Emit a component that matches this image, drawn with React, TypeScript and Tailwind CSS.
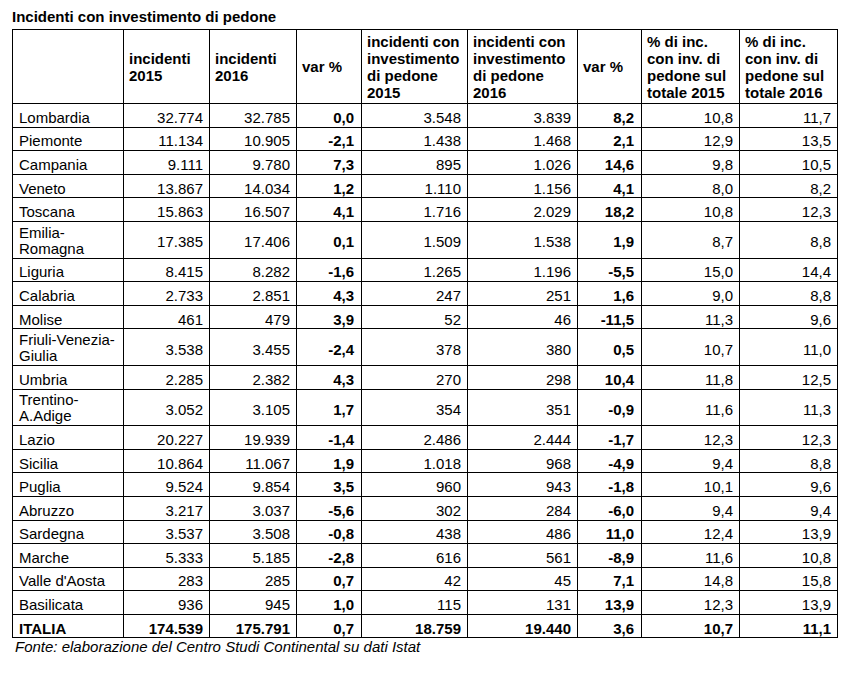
type Row = {
  region: string
  values: string[]
  tall?: boolean
  total?: boolean
}

const rows: Row[] = [
  { region: 'Lombardia', values: ['32.774', '32.785', '0,0', '3.548', '3.839', '8,2', '10,8', '11,7'] },
  { region: 'Piemonte', values: ['11.134', '10.905', '-2,1', '1.438', '1.468', '2,1', '12,9', '13,5'] },
  { region: 'Campania', values: ['9.111', '9.780', '7,3', '895', '1.026', '14,6', '9,8', '10,5'] },
  { region: 'Veneto', values: ['13.867', '14.034', '1,2', '1.110', '1.156', '4,1', '8,0', '8,2'] },
  { region: 'Toscana', values: ['15.863', '16.507', '4,1', '1.716', '2.029', '18,2', '10,8', '12,3'] },
  { region: 'Emilia-Romagna', tall: true, values: ['17.385', '17.406', '0,1', '1.509', '1.538', '1,9', '8,7', '8,8'] },
  { region: 'Liguria', values: ['8.415', '8.282', '-1,6', '1.265', '1.196', '-5,5', '15,0', '14,4'] },
  { region: 'Calabria', values: ['2.733', '2.851', '4,3', '247', '251', '1,6', '9,0', '8,8'] },
  { region: 'Molise', values: ['461', '479', '3,9', '52', '46', '-11,5', '11,3', '9,6'] },
  { region: 'Friuli-Venezia-Giulia', tall: true, values: ['3.538', '3.455', '-2,4', '378', '380', '0,5', '10,7', '11,0'] },
  { region: 'Umbria', values: ['2.285', '2.382', '4,3', '270', '298', '10,4', '11,8', '12,5'] },
  { region: 'Trentino-A.Adige', tall: true, values: ['3.052', '3.105', '1,7', '354', '351', '-0,9', '11,6', '11,3'] },
  { region: 'Lazio', values: ['20.227', '19.939', '-1,4', '2.486', '2.444', '-1,7', '12,3', '12,3'] },
  { region: 'Sicilia', values: ['10.864', '11.067', '1,9', '1.018', '968', '-4,9', '9,4', '8,8'] },
  { region: 'Puglia', values: ['9.524', '9.854', '3,5', '960', '943', '-1,8', '10,1', '9,6'] },
  { region: 'Abruzzo', values: ['3.217', '3.037', '-5,6', '302', '284', '-6,0', '9,4', '9,4'] },
  { region: 'Sardegna', values: ['3.537', '3.508', '-0,8', '438', '486', '11,0', '12,4', '13,9'] },
  { region: 'Marche', values: ['5.333', '5.185', '-2,8', '616', '561', '-8,9', '11,6', '10,8'] },
  { region: "Valle d'Aosta", values: ['283', '285', '0,7', '42', '45', '7,1', '14,8', '15,8'] },
  { region: 'Basilicata', values: ['936', '945', '1,0', '115', '131', '13,9', '12,3', '13,9'] },
  { region: 'ITALIA', total: true, values: ['174.539', '175.791', '0,7', '18.759', '19.440', '3,6', '10,7', '11,1'] },
]

// var % columns are bold on every row
const boldCols = [2, 5]

const headers: string[][] = [
  ['incidenti', '2015'],
  ['incidenti', '2016'],
  ['var %'],
  ['incidenti con', 'investimento', 'di pedone', '2015'],
  ['incidenti con', 'investimento', 'di pedone', '2016'],
  ['var %'],
  ['% di inc.', 'con inv. di', 'pedone sul', 'totale 2015'],
  ['% di inc.', 'con inv. di', 'pedone sul', 'totale 2016'],
]

const colWidths = ['w-[111px]', 'w-[86px]', 'w-[87px]', 'w-[65px]', 'w-[106px]', 'w-[110px]', 'w-[64px]', 'w-[98px]', 'w-[98px]']

export default function App() {
  return (
    <div
      className="min-h-[674px] w-[850px] bg-white pl-[12px] pt-[7px] text-[15px] text-black"
      style={{ fontFamily: '"Liberation Sans", Arial, sans-serif' }}
    >
      <div className="mb-[2px] font-bold leading-[20px]">Incidenti con investimento di pedone</div>

      <table className="w-[826px] table-fixed border-collapse">
        <colgroup>
          {colWidths.map((w, i) => (
            <col key={i} className={w} />
          ))}
        </colgroup>
        <thead>
          <tr className="h-[74px]">
            <th className="border border-black" />
            {headers.map((lines, i) => (
              <th
                key={i}
                className="border border-black pl-[5px] pr-0 text-left align-middle font-bold leading-[17px] whitespace-nowrap"
              >
                {lines.map((l, j) => (
                  <div key={j}>{l}</div>
                ))}
              </th>
            ))}
          </tr>
        </thead>
        <tbody>
          {rows.map((r) => (
            <tr key={r.region} className={r.tall ? 'h-[36.6px]' : 'h-[23.6px]'}>
              <td
                className={`border border-black pl-[6px] pr-[2px] align-middle leading-[16px] ${
                  r.tall ? 'pt-[2px]' : 'pt-[5px]'
                } ${r.total ? 'font-bold' : ''}`}
              >
                {r.region}
              </td>
              {r.values.map((v, i) => (
                <td
                  key={i}
                  className={`border border-black pt-[5px] text-right align-middle leading-[16px] ${
                    boldCols.includes(i) ? 'pr-[7px] font-bold' : 'pr-[6px]'
                  } ${r.total ? 'font-bold' : ''}`}
                >
                  {v}
                </td>
              ))}
            </tr>
          ))}
        </tbody>
      </table>

      <div className="pl-[3px] italic leading-[17px]">
        Fonte: elaborazione del Centro Studi Continental su dati Istat
      </div>
    </div>
  )
}
